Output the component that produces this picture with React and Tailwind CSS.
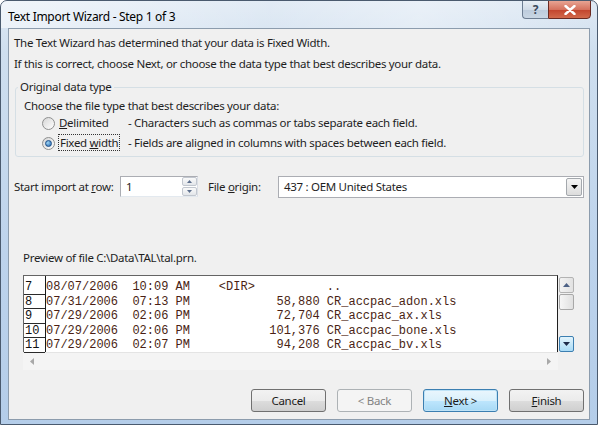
import React from 'react';

const rows = [
  ['7', '08/07/2006  10:09 AM    <DIR>          ..'],
  ['8', '07/31/2006  07:13 PM            58,880 CR_accpac_adon.xls'],
  ['9', '07/29/2006  02:06 PM            72,704 CR_accpac_ax.xls'],
  ['10', '07/29/2006  02:06 PM           101,376 CR_accpac_bone.xls'],
  ['11', '07/29/2006  02:07 PM            94,208 CR_accpac_bv.xls'],
];

function Radio({ checked }) {
  return (
    <span className="w-[13px] h-[13px] shrink-0 rounded-full border border-[#8e8f8f] bg-[linear-gradient(135deg,#d6d6d6,#ffffff)] flex items-center justify-center">
      {checked && (
        <span className="w-[7px] h-[7px] rounded-full bg-[radial-gradient(circle_at_35%_35%,#9fd6f6,#1e5fa8)] border border-[#1c4f8a]" />
      )}
    </span>
  );
}

function Button({ children, focused, disabled }) {
  let cls = 'border-[#707070] bg-[linear-gradient(180deg,#f2f2f2_0%,#ebebeb_50%,#dddddd_51%,#cfcfcf_100%)] text-[#1b1b1b]';
  if (focused) cls = 'border-[#3c7fb1] bg-[linear-gradient(180deg,#eaf6fd_0%,#d9f0fc_50%,#bee6fd_51%,#a7d9f5_100%)] text-[#1b1b1b] shadow-[inset_0_0_0_1px_#bfe3f7]';
  if (disabled) cls = 'border-[#adb2b5] bg-[#f4f4f4] text-[#838383]';
  return (
    <div className={`w-[75px] h-[23px] rounded-[3px] border flex items-center justify-center ${cls}`}>
      {children}
    </div>
  );
}

function ScrollBtn({ dir, hot }) {
  const cls = hot
    ? 'border-[#3c7fb1] bg-[linear-gradient(180deg,#e3f4fc,#a9dbf6)]'
    : 'border-[#b3b3b3] bg-[linear-gradient(90deg,#f3f3f3,#e2e2e2)]';
  return (
    <div className={`w-[15px] h-[16px] rounded-[2px] border flex items-center justify-center ${cls}`}>
      <svg width="7" height="4" viewBox="0 0 7 4">
        {dir === 'up' ? <path d="M0 4 L3.5 0 L7 4 Z" fill="#4d6185" /> : <path d="M0 0 L3.5 4 L7 0 Z" fill="#1d2b49" />}
      </svg>
    </div>
  );
}

export default function App() {
  return (
    <div className="w-[598px] h-[425px] overflow-hidden rounded-t-[7px] border border-[#4a5a6e] bg-[linear-gradient(180deg,#dfe9f4_0%,#cfdfef_12%,#bdd3ec_60%,#b4cde9_100%)] font-['Noto_Sans',sans-serif] text-[11.5px] tracking-[-0.3px] text-[#1e1e1e] flex flex-col">
      {/* title bar */}
      <div className="h-[27px] flex items-start justify-between bg-[linear-gradient(100deg,rgba(255,255,255,0.55)_0%,rgba(255,255,255,0.1)_45%,rgba(255,255,255,0.35)_70%,rgba(255,255,255,0)_100%)]">
        <div className="pl-[7px] pt-[8px] text-[12px] tracking-[-0.3px] leading-[16px] text-black">Text Import Wizard - Step 1 of 3</div>
        <div className="flex mr-[6px] -mt-[1px]">
          <div className="w-[26px] h-[19px] rounded-bl-[4px] border border-[#6d7d92] border-r-0 bg-[linear-gradient(180deg,#e8eef5_0%,#d2dce8_50%,#bccbdc_51%,#c9d6e4_100%)] flex items-center justify-center text-[12px] text-[#3c4a5c] font-bold">?</div>
          <div className="w-[43px] h-[19px] rounded-br-[4px] border border-[#6a2a22] bg-[linear-gradient(180deg,#e8a493_0%,#d5725e_50%,#c2432c_51%,#d26a4c_100%)] flex items-center justify-center">
            <svg width="12" height="10" viewBox="0 0 12 10">
              <path d="M1.5 1 L10.5 9 M10.5 1 L1.5 9" stroke="#ffffff" strokeWidth="2.4" strokeLinecap="round" />
            </svg>
          </div>
        </div>
      </div>

      {/* client area */}
      <div className="ml-[7px] w-[582px] h-[392px] border border-[#8c9cad] bg-[#f0f0f0] pl-[5px] pr-[5px] leading-[16px]">
        <div className="mt-[6px]">The Text Wizard has determined that your data is Fixed Width.</div>
        <div className="mt-[5px]">If this is correct, choose Next, or choose the data type that best describes your data.</div>

        <fieldset className="mt-[7px] ml-[1px] w-[569px] border border-[#d5dfe5] rounded-[3px] pl-[8px] pb-[3px]">
          <legend className="-ml-[6px] px-[2px]">Original data type</legend>
          <div className="pt-[3px] h-[18px] leading-[15px]">Choose the file type that best describes your data:</div>
          <div className="h-[20px] flex items-center ml-[18px]">
            <Radio />
            <span className="w-[70px] ml-[3px] pl-[1px]"><span className="underline">D</span>elimited</span>
            <span>- Characters such as commas or tabs separate each field.</span>
          </div>
          <div className="h-[20px] flex items-center ml-[18px]">
            <Radio checked />
            <span className="w-[70px] ml-[3px]">
              <span className="border border-dotted border-[#333] px-[1px] leading-[14px]">Fixed <span className="underline">w</span>idth</span>
            </span>
            <span>- Fields are aligned in columns with spaces between each field.</span>
          </div>
        </fieldset>

        <div className="mt-[19px] h-[21px] flex items-center whitespace-nowrap">
          <div className="w-[106px]">Start import at <span className="underline">r</span>ow:</div>
          <div className="w-[78px] h-[21px] bg-white border border-[#abadb3] border-r-[#dbdfe6] border-b-[#e3e9ef] flex items-center">
            <span className="flex-1 pl-[5px]">1</span>
            <div className="w-[15px] h-[19px] flex flex-col">
              <div className="h-[9px] border border-[#c2c7cf] rounded-[2px] bg-[linear-gradient(180deg,#fafafa,#e3e6ea)] flex items-center justify-center">
                <svg width="5" height="3" viewBox="0 0 5 3"><path d="M0 3 L2.5 0 L5 3 Z" fill="#5d6f8d" /></svg>
              </div>
              <div className="h-[9px] mt-[1px] border border-[#c2c7cf] rounded-[2px] bg-[linear-gradient(180deg,#fafafa,#e3e6ea)] flex items-center justify-center">
                <svg width="5" height="3" viewBox="0 0 5 3"><path d="M0 0 L2.5 3 L5 0 Z" fill="#5d6f8d" /></svg>
              </div>
            </div>
          </div>
          <div className="ml-[10px] w-[70px]">File <span className="underline">o</span>rigin:</div>
          <div className="w-[306px] h-[22px] bg-white border border-[#abadb3] flex items-center">
            <span className="flex-1 pl-[5px]">437 : OEM United States</span>
            <div className="w-[16px] h-[18px] mr-[1px] border border-[#a4a8ad] rounded-[2px] bg-[linear-gradient(180deg,#f5f5f5,#dcdcdc)] flex items-center justify-center">
              <svg width="7" height="4" viewBox="0 0 7 4"><path d="M0 0 L3.5 4 L7 0 Z" fill="#000" /></svg>
            </div>
          </div>
        </div>

        <div className="mt-[53px] ml-[9px]">Preview of file C:\Data\TAL\tal.prn.</div>

        {/* preview */}
        <div className="mt-[9px] ml-[9px] flex">
          <div className="w-[535px]">
            <div className="h-[77px] bg-white border-t border-l border-r border-[#646464] border-r-[#1f1f1f] flex font-['Liberation_Mono',monospace] text-[12px] tracking-normal leading-[14.5px]">
              <div className="w-[22px] border-r border-[#1a1a1a] pt-[4px]">
                {rows.map((r) => (
                  <div key={r[0]} className="h-[14.5px] pl-[1px] border-b border-[#2a2a2a] text-[#111]">{r[0]}</div>
                ))}
              </div>
              <div className="flex-1 pt-[4px] overflow-hidden">
                {rows.map((r) => (
                  <div key={r[0]} className="h-[14.5px] whitespace-pre text-[#4a1f14]">{r[1]}</div>
                ))}
              </div>
            </div>
            <div className="h-[18px] bg-[#f4f4f4] border-t border-[#e4e4e4] flex items-center justify-between px-[7px]">
              <svg width="4" height="7" viewBox="0 0 4 7"><path d="M4 0 L0 3.5 L4 7 Z" fill="#a8a8a8" /></svg>
              <svg width="4" height="7" viewBox="0 0 4 7"><path d="M0 0 L4 3.5 L0 7 Z" fill="#a8a8a8" /></svg>
            </div>
          </div>
          <div className="w-[16px] h-[77px] pl-[1px] pt-[2px] flex flex-col bg-[#f0f0f0]">
            <ScrollBtn dir="up" />
            <div className="w-[15px] h-[16px] mt-[1px] rounded-[2px] border border-[#a8a8a8] bg-[linear-gradient(90deg,#f6f6f6,#e0e0e0)]" />
            <div className="flex-1" />
            <ScrollBtn dir="down" hot />
          </div>
        </div>

        <div className="mt-[19px] flex justify-end gap-[11px]">
          <Button>Cancel</Button>
          <Button disabled>&lt; Back</Button>
          <Button focused><span><span className="underline">N</span>ext &gt;</span></Button>
          <Button><span><span className="underline">F</span>inish</span></Button>
        </div>
      </div>
    </div>
  );
}
